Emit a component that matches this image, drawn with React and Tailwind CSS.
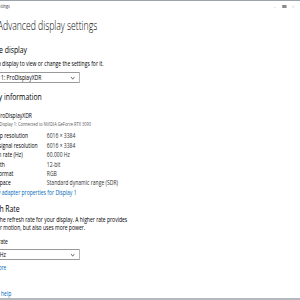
import React from "react";

const rows = [
  ["Desktop resolution", "6016 × 3384"],
  ["Active signal resolution", "6016 × 3384"],
  ["Refresh rate (Hz)", "60.000 Hz"],
  ["Bit depth", "12-bit"],
  ["Color format", "RGB"],
  ["Color space", "Standard dynamic range (SDR)"],
];

const Chevron = () => (
  <svg width="6" height="4" viewBox="0 0 6 4" className="shrink-0">
    <path d="M0.5 0.8 L3 3.2 L5.5 0.8" fill="none" stroke="#333" strokeWidth="0.8" />
  </svg>
);

const Dropdown = ({ value, className }) => (
  <div
    className={`flex h-[11px] w-[140px] items-center justify-between border border-[#999] bg-white pl-[4px] pr-[6px] text-[7px] leading-none text-black ${className}`}
  >
    <span className="whitespace-nowrap">{value}</span>
    <Chevron />
  </div>
);

export default function App() {
  return (
    <div className="h-[300px] w-[300px] overflow-hidden bg-white">
      <div
        className="flex h-[300px] w-[417px] origin-top-left scale-x-[0.72] flex-col text-black"
        style={{ fontFamily: '"Open Sans", "Noto Sans", sans-serif' }}
      >
        <div className="h-[1px] w-full bg-[#9ba3ab]" />

        <div className="flex h-[11px] items-center justify-between">
          <span className="-ml-[5px] whitespace-nowrap text-[5px] leading-none text-[#333]">Settings</span>
          <div className="mr-[8px] flex items-center gap-[8px] text-[4px] leading-none text-[#bbb]">
            <span>—</span>
            <span className="h-[3px] w-[6px] bg-[#8a8a8a]" />
            <span>✕</span>
          </div>
        </div>

        <h1 className="-ml-[3px] mt-[8px] whitespace-nowrap text-[12px] font-light leading-[12px]">
          Advanced display settings
        </h1>

        <div className="-ml-[29px] flex flex-col">
          <h2 className="mt-[13px] whitespace-nowrap text-[9.5px] leading-[10px]">Choose display</h2>
          <p className="mt-[5px] whitespace-nowrap text-[7px] leading-[8px]">
            Choose a display to view or change the settings for it.
          </p>
          <Dropdown value="Display 1: ProDisplayXDR" className="mt-[4px]" />
          <h2 className="mt-[9px] whitespace-nowrap text-[9.5px] leading-[10px]">Display information</h2>
        </div>

        <div className="-ml-[4px] mt-[10px] whitespace-nowrap text-[7px] leading-[8px]">ProDisplayXDR</div>
        <div className="-ml-[1px] whitespace-nowrap text-[5.5px] leading-[8px] text-[#555]">
          Display 1: Connected to NVIDIA GeForce RTX 3090
        </div>

        <div className="-ml-[23px] mt-[3.3px] flex flex-col text-[7px] leading-[9.4px]">
          {rows.map(([label, value]) => (
            <div key={label} className="flex whitespace-nowrap">
              <span className="w-[88px] shrink-0">{label}</span>
              <span className="text-[#333]">{value}</span>
            </div>
          ))}
          <a className="whitespace-nowrap text-[#0067b8]">Display adapter properties for Display 1</a>
        </div>

        <div className="-ml-[29px] flex flex-col">
          <h2 className="mt-[7px] whitespace-nowrap text-[9.5px] leading-[10px]">Refresh Rate</h2>
          <p className="mt-[2px] whitespace-nowrap text-[7px] leading-[7.5px]">
            Choose the refresh rate for your display. A higher rate provides
            <br />
            smoother motion, but also uses more power.
          </p>
          <div className="mt-[7px] whitespace-nowrap text-[7px] leading-[8px]">Refresh rate</div>
          <Dropdown value="60.000 Hz" className="mt-[3px]" />
          <a className="mt-[4px] whitespace-nowrap text-[7px] leading-[8px] text-[#0067b8]">Learn more</a>
        </div>

        <a className="-ml-[12px] mt-auto whitespace-nowrap text-[7px] leading-[7px] text-[#0067b8]">Get help</a>
        <div className="mt-[1px] h-[2px] w-full bg-[#b5b9bd]" />
      </div>
    </div>
  );
}
